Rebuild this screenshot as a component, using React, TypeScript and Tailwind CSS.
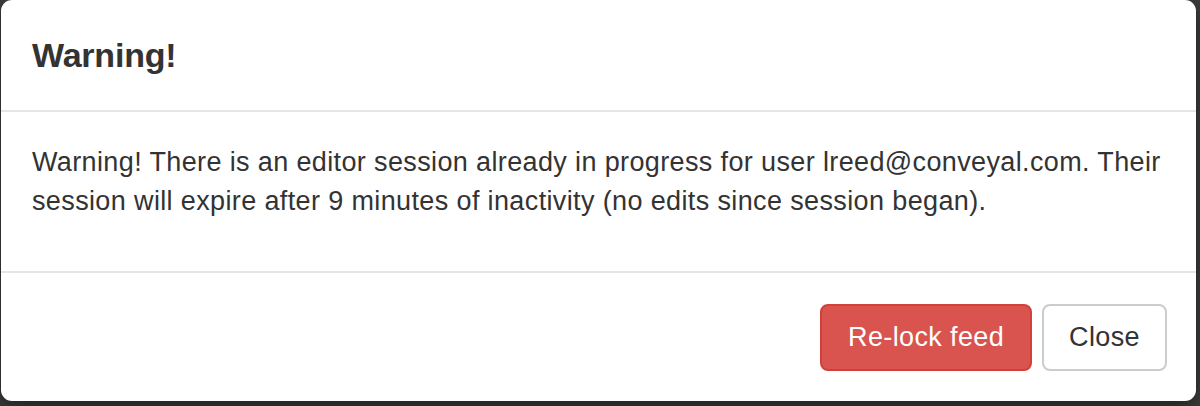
import React from "react";

const font = { fontFamily: '"Liberation Sans", Arial, Helvetica, sans-serif' };

export default function App() {
  return (
    <div className="w-[1200px] h-[406px] bg-[#3e3d3b] overflow-hidden" style={font}>
      {/* ── Modal content ─────────────────────────────────────────── */}
      <div className="ml-[1px] w-[1195px] h-[401px] bg-white rounded-[11px] shadow-[0_6px_20px_rgba(0,0,0,0.5)] flex flex-col text-[#333]">
        <div className="pt-[31px] pb-[30px] px-[31px] border-b-2 border-[#e5e5e5]">
          <h4 className="text-[34px] leading-[49px] font-bold tracking-[-0.2px]">Warning!</h4>
        </div>

        <div className="pt-[31px] pb-[50px] px-[31px] border-b-2 border-[#e5e5e5]">
          <p className="text-[27px] leading-[39px] tracking-[0.37px]">
            Warning! There is an editor session already in progress for user lreed@conveyal.com. Their
            <br />
            session will expire after 9 minutes of inactivity (no edits since session began).
          </p>
        </div>

        <div className="pt-[31px] px-[29px] flex justify-end gap-[10px]">
          <button
            type="button"
            className="h-[67px] px-[26px] text-[27px] tracking-[0.37px] text-white bg-[#d9534f] border-2 border-[#d43f3a] rounded-[8px]"
          >
            Re-lock feed
          </button>
          <button
            type="button"
            className="h-[67px] px-[25px] text-[27px] tracking-[0.37px] text-[#333] bg-white border-2 border-[#ccc] rounded-[8px]"
          >
            Close
          </button>
        </div>
      </div>
    </div>
  );
}
